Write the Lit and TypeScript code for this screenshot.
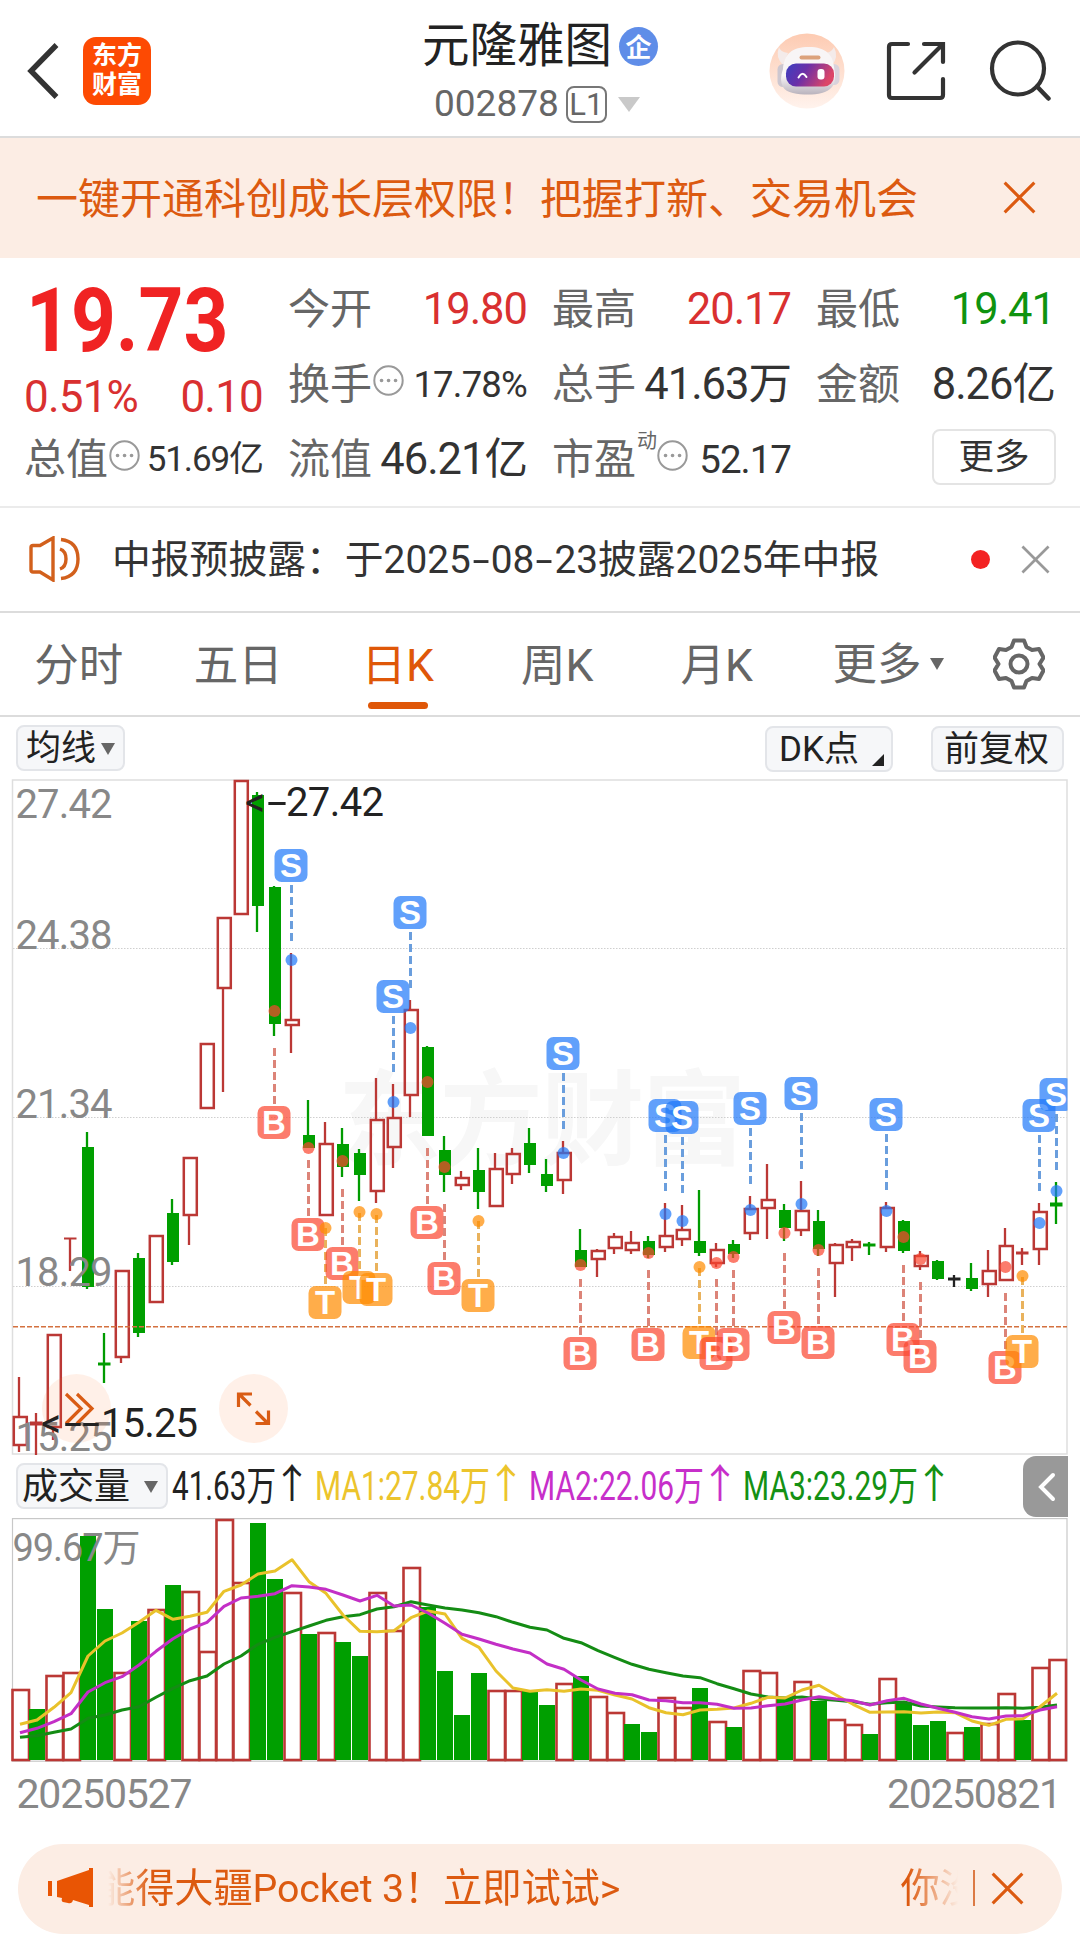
import {LitElement, css, html, svg} from 'lit';
import {customElement} from 'lit/decorators.js';

type Tone = 'up' | 'down' | 'flat';

// tone, high, body top, body bottom, low
type Candle = [Tone, number, number, number, number];

// badge letter, candle index, dot y
type Signal = ['S' | 'B' | 'T', number, number];

const STEP = 17;
const FIRST_X = 19;
const candleX = (i: number) => FIRST_X + i * STEP;

const CANDLES: Candle[] = [
  ['up', 1377, 1416, 1446, 1452],
  ['up', 1413, 1422, 1425, 1455],
  ['up', 1334, 1334, 1428, 1440],
  ['up', 1238, 1238, 1239, 1271],
  ['down', 1132, 1147, 1287, 1289],
  ['down', 1333, 1363, 1365, 1383],
  ['up', 1270, 1270, 1358, 1363],
  ['down', 1253, 1258, 1333, 1337],
  ['up', 1235, 1235, 1303, 1303],
  ['down', 1199, 1213, 1262, 1265],
  ['up', 1157, 1157, 1216, 1245],
  ['up', 1043, 1043, 1109, 1109],
  ['up', 917, 917, 989, 1092],
  ['up', 780, 780, 915, 915],
  ['down', 792, 795, 906, 932],
  ['down', 886, 887, 1024, 1036],
  ['up', 953, 1019, 1026, 1053],
  ['down', 1100, 1135, 1148, 1148],
  ['up', 1122, 1143, 1216, 1216],
  ['down', 1128, 1144, 1167, 1177],
  ['down', 1149, 1153, 1175, 1201],
  ['up', 1078, 1119, 1192, 1203],
  ['up', 1084, 1117, 1148, 1168],
  ['up', 1000, 1009, 1096, 1117],
  ['down', 1046, 1047, 1136, 1136],
  ['down', 1136, 1150, 1175, 1192],
  ['up', 1171, 1177, 1186, 1190],
  ['down', 1148, 1170, 1192, 1209],
  ['up', 1153, 1168, 1207, 1207],
  ['up', 1148, 1153, 1175, 1184],
  ['down', 1128, 1143, 1165, 1173],
  ['down', 1159, 1174, 1186, 1192],
  ['up', 1141, 1152, 1181, 1194],
  ['down', 1229, 1250, 1267, 1267],
  ['up', 1249, 1250, 1260, 1277],
  ['up', 1233, 1236, 1249, 1254],
  ['up', 1231, 1242, 1251, 1254],
  ['down', 1236, 1241, 1255, 1258],
  ['up', 1203, 1235, 1248, 1252],
  ['up', 1205, 1229, 1240, 1246],
  ['down', 1190, 1241, 1253, 1256],
  ['up', 1243, 1249, 1264, 1267],
  ['down', 1240, 1244, 1254, 1258],
  ['up', 1196, 1208, 1234, 1240],
  ['up', 1164, 1199, 1209, 1239],
  ['down', 1204, 1210, 1228, 1241],
  ['up', 1181, 1210, 1231, 1236],
  ['down', 1210, 1221, 1249, 1256],
  ['up', 1243, 1244, 1264, 1297],
  ['up', 1239, 1241, 1248, 1261],
  ['down', 1242, 1244, 1246, 1255],
  ['up', 1202, 1207, 1248, 1252],
  ['down', 1220, 1221, 1251, 1253],
  ['up', 1251, 1255, 1267, 1270],
  ['down', 1260, 1261, 1279, 1280],
  ['flat', 1275, 1278, 1280, 1287],
  ['down', 1263, 1278, 1289, 1291],
  ['up', 1250, 1270, 1285, 1297],
  ['up', 1228, 1245, 1281, 1281],
  ['up', 1248, 1252, 1254, 1265],
  ['up', 1203, 1211, 1250, 1265],
  ['down', 1182, 1203, 1206, 1224],
];

const SIGNALS: Signal[] = [
  ['B', 15, 1011], ['S', 16, 960], ['B', 17, 1148], ['T', 18, 1228], ['B', 19, 1161],
  ['T', 20, 1212], ['T', 21, 1214], ['S', 22, 1102], ['S', 23, 1028], ['B', 24, 1082],
  ['B', 25, 1167], ['T', 27, 1221], ['S', 32, 1153], ['B', 33, 1265], ['B', 37, 1253],
  ['S', 38, 1214], ['S', 39, 1221], ['T', 40, 1267], ['B', 41, 1263], ['B', 42, 1257],
  ['S', 43, 1210], ['B', 45, 1233], ['S', 46, 1204], ['B', 47, 1250], ['S', 51, 1211],
  ['B', 52, 1237], ['B', 53, 1259], ['B', 58, 1267], ['T', 59, 1276], ['S', 60, 1223],
  ['S', 61, 1191],
];

// bar tops, negative marks a falling (solid) bar
const VOLUMES = [
  1689, -1709, 1675, 1672, -1536, -1609, 1672, -1621, 1609, -1585, 1591, 1651, 1519, 1582, -1523, -1579,
  1592, -1634, 1632, -1642, -1656, 1592, 1630, 1567, -1607, -1671, -1715, -1673, 1690, 1690, -1691, -1705,
  1683, -1676, 1696, 1712, -1724, -1732, 1697, 1707, -1688, 1721, -1727, 1670, 1672, -1697, 1681, -1701,
  1719, 1724, -1734, 1678, -1702, -1725, -1721, 1732, -1727, 1723, 1693, -1720, 1667, 1659,
];

// moving averages, in thirds of a pixel below y = 1450
const MA1 = [
  823, 810, 772, 728, 618, 573, 549, 517, 481, 508, 499, 487, 424, 405, 372, 363, 329, 395, 430, 495, 544,
  545, 542, 503, 483, 492, 565, 592, 663, 714, 724, 719, 724, 717, 721, 735, 747, 773, 788, 794, 780, 778,
  774, 760, 742, 744, 720, 706, 735, 763, 787, 786, 785, 789, 786, 788, 813, 826, 808, 806, 770, 730,
];
const MA2 = [
  848, 835, 815, 791, 726, 698, 680, 645, 604, 566, 537, 517, 469, 444, 439, 431, 407, 411, 418, 435, 453,
  436, 468, 465, 489, 520, 553, 567, 583, 597, 609, 642, 658, 690, 717, 730, 734, 750, 752, 758, 758, 763,
  775, 774, 767, 762, 750, 740, 747, 752, 765, 752, 745, 762, 775, 787, 800, 807, 798, 797, 780, 770,
];
const MA3 = [
  862, 857, 847, 837, 805, 795, 780, 770, 742, 715, 692, 678, 642, 618, 583, 562, 545, 528, 511, 500, 494,
  477, 470, 455, 465, 474, 480, 488, 500, 517, 532, 540, 565, 578, 602, 623, 643, 658, 668, 678, 683, 701,
  716, 732, 741, 744, 741, 747, 751, 755, 763, 758, 756, 768, 771, 773, 774, 774, 773, 775, 772, 765,
];

const maPoints = (ma: number[]) =>
  ma.map((v, i) => `${candleX(i) + 1},${(1450 + v / 3).toFixed(1)}`).join(' ');

const cross = (size: number) => html`
  <svg class="cross" width=${size} height=${size} viewBox="0 0 30 30">
    <path d="M1.5 1.5 28.5 28.5M28.5 1.5 1.5 28.5" />
  </svg>
`;

const dots = html`
  <svg class="dots" width="31" height="31" viewBox="0 0 31 31">
    <circle cx="15.5" cy="15.5" r="14.2" />
    <path d="M8.5 15.5h.1M15.5 15.5h.1M22.5 15.5h.1" />
  </svg>
`;

@customElement('kline-chart')
export class KlineChart extends LitElement {
  static styles = css`
    :host {
      display: block;
      height: 684px;
      font-family: Roboto, 'Noto Sans CJK SC', sans-serif;
    }
    svg { display: block; }
    .frame { fill: none; stroke: #dedede; stroke-width: 1.5; }
    .grid { stroke: #cfcfcf; stroke-width: 1; stroke-dasharray: 1.5 1.5; }
    .last { stroke: #d4713f; stroke-width: 1.6; stroke-dasharray: 5 2; }
    .watermark { font: 700 103px 'Noto Sans CJK SC', sans-serif; fill: #f7f7f7; }
    .wick { stroke-width: 2.3; }
    .body { stroke-width: 2.5; }
    .up { stroke: #bb3835; fill: none; }
    .down { stroke: #009b00; fill: #009f00; }
    .flat { stroke: #222; fill: #222; }
    .down.body { stroke: none; }
    .axis { font-size: 40px; fill: #888; }
    .mark { font-size: 40px; fill: #222; }
    .round { fill: rgba(255, 120, 50, 0.11); }
    .icon { fill: none; stroke: #d95c14; stroke-width: 3.2; }
    .stem { stroke-width: 3; stroke-dasharray: 8 4; }
    .badge-text { font: 700 33px 'Liberation Sans', sans-serif; fill: #fff; text-anchor: middle; }
    .S .stem { stroke: #6a9edd; }
    .B .stem { stroke: #dc8478; }
    .T .stem { stroke: #e9b25c; }
    .S .shape { fill: rgba(32, 121, 250, 0.71); }
    .B .shape { fill: rgba(251, 71, 48, 0.71); }
    .T .shape { fill: rgba(255, 140, 0, 0.71); }
  `;

  private renderCandle([tone, high, top, bottom, low]: Candle, i: number) {
    const x = candleX(i);
    if (bottom - top < 5) {
      return svg`
        <path class="wick ${tone}" d="M${x} ${high}V${low}" />
        <path class="${tone}" stroke-width=${bottom - top + 1} d="M${x - 6} ${(top + bottom) / 2}H${x + 6.5}" />
      `;
    }
    return svg`
      <path class="wick ${tone}" d="M${x} ${high}V${top}M${x} ${bottom}V${low}" />
      ${tone === 'up'
        ? svg`<rect class="body up" x=${x - 5.2} y=${top + 1} width="13" height=${bottom - top - 2} />`
        : svg`<rect class="body ${tone}" x=${x - 5} y=${top} width="12" height=${bottom - top} />`}
    `;
  }

  private renderSignal([kind, i, dot]: Signal) {
    const x = candleX(i);
    const [, high, , , low] = CANDLES[i];
    const start = kind === 'S' ? high - 68 : low + 12;
    const center = kind === 'S' ? high - 87.5 : low + 86.5;
    return svg`
      <g class=${kind}>
        <path class="stem" d="M${x + 0.5} ${start}v56" />
        <circle class="shape" cx=${x + 0.5} cy=${dot} r="6" />
        <rect class="shape" x=${x - 16.5} y=${center - 16.5} width="33" height="33" rx="7" />
        <text class="badge-text" x=${x} y=${center + 11.5}>${kind}</text>
      </g>
    `;
  }

  render() {
    return html`
      <svg width="1080" height="684" viewBox="0 774 1080 684">
        <defs>
          <clipPath id="plot"><rect x="12" y="779" width="1055.5" height="678" /></clipPath>
        </defs>
        <text class="watermark" x="338" y="1157" textLength="408">东方财富</text>
        ${[948.5, 1117.5, 1286.5].map((y) => svg`<path class="grid" d="M13 ${y}H1067" />`)}
        <rect class="frame" x="12.5" y="780" width="1054.5" height="674" />
        <g clip-path="url(#plot)">
          ${CANDLES.map((c, i) => this.renderCandle(c, i))}
          <path class="last" d="M13 1326.7H1067" />
          ${SIGNALS.map((s) => this.renderSignal(s))}
        </g>
        <g class="axis">
          <text x="15.5" y="818" textLength="97">27.42</text>
          <text x="15.5" y="949" textLength="97">24.38</text>
          <text x="15.5" y="1118" textLength="97">21.34</text>
          <text x="15.5" y="1286" textLength="97">18.29</text>
          <text x="15.5" y="1451" textLength="97">15.25</text>
        </g>
        <circle class="round" cx="76.5" cy="1408.5" r="34.5" />
        <circle class="round" cx="253.5" cy="1408.5" r="34.5" />
        <path class="icon" d="M66 1394l15 14.5-15 15M77 1394l15 14.5-15 15" />
        <path class="icon" d="M252 1394h-13.5v13M239 1394l11.5 11.5M255.5 1423.5h13v-13M268 1423.5l-12-12" />
        <g class="mark">
          <text x="245" y="816">&lt;</text>
          <text x="267" y="816" textLength="20" lengthAdjust="spacingAndGlyphs">-</text>
          <text x="286" y="816" textLength="98">27.42</text>
          <text x="41" y="1437">&lt;</text>
          <text x="64" y="1437" textLength="36" lengthAdjust="spacingAndGlyphs">--</text>
          <text x="101" y="1437" textLength="97">15.25</text>
        </g>
      </svg>
    `;
  }
}

@customElement('volume-chart')
export class VolumeChart extends LitElement {
  static styles = css`
    :host {
      display: block;
      height: 302px;
      font-family: Roboto, 'Noto Sans CJK SC', sans-serif;
    }
    svg { display: block; }
    .frame { fill: none; stroke: #c8c8c8; stroke-width: 1.2; }
    .up { fill: #fff; stroke: #bb3835; stroke-width: 2.6; }
    .down { fill: #009f00; }
    .line { fill: none; stroke-width: 3; stroke-linejoin: round; }
    .ma1 { stroke: #e9c22b; }
    .ma2 { stroke: #c32fc6; }
    .ma3 { stroke: #148c14; }
    .label { font-size: 38px; fill: #888; }
    .date { font-size: 41px; fill: #888; }
  `;

  render() {
    return html`
      <svg width="1080" height="302" viewBox="0 1518 1080 302">
        <rect class="frame" x="12.5" y="1518.6" width="1054.5" height="242.6" />
        ${VOLUMES.map((v, i) => {
          const x = candleX(i);
          const top = Math.abs(v);
          return v > 0
            ? svg`<rect class="up" x=${x - 6.5} y=${top + 1} width="16.5" height=${1759 - top} />`
            : svg`<rect class="down" x=${x - 7} y=${top} width="16" height=${1760 - top} />`;
        })}
        <polyline class="line ma3" points=${maPoints(MA3)} />
        <polyline class="line ma1" points=${maPoints(MA1)} />
        <polyline class="line ma2" points=${maPoints(MA2)} />
        <text class="label" x="12.5" y="1561" textLength="128">99.67万</text>
        <text class="date" x="16.5" y="1808" textLength="176">20250527</text>
        <text class="date" x="887" y="1808" textLength="175">20250821</text>
      </svg>
    `;
  }
}

@customElement('app-root')
export class AppRoot extends LitElement {
  static styles = css`
    :host {
      display: block;
      width: 1080px;
      height: 1941px;
      overflow: hidden;
      background: #fff;
      color: #333;
      font-family: Roboto, 'Noto Sans CJK SC', sans-serif;
      line-height: 1.2;
    }

    * { box-sizing: border-box; }
    svg { display: block; flex: none; }
    .cross { fill: none; stroke: currentColor; stroke-width: 2.8; }

    header {
      display: grid;
      grid-template-columns: 1fr auto 1fr;
      height: 138px;
      padding: 0 29px 0 27px;
      border-bottom: 2px solid #dcdcdc;
    }
    .left, .right {
      display: flex;
      align-items: center;
      height: 141px;
    }
    .left { gap: 23px; }
    .logo {
      width: 68px;
      height: 68px;
      padding-top: 2px;
      border-radius: 13px;
      background: #fd4a03;
      color: #fff;
      font: 700 25px/29.5px 'Noto Sans CJK SC', sans-serif;
      text-align: center;
    }
    .right { justify-content: flex-end; }
    .share { margin: 0 43px 0 41px; }

    .title { padding: 19px 0 0 2px; }
    .name {
      display: flex;
      align-items: center;
      gap: 7px;
      height: 54px;
      color: #222;
      font-size: 47.5px;
      line-height: 56px;
    }
    .corp {
      width: 39px;
      height: 39px;
      border-radius: 50%;
      background: #5f8de8;
      color: #fff;
      font: 700 26px/37px 'Noto Sans CJK SC', sans-serif;
      text-align: center;
    }
    .code {
      display: flex;
      align-items: center;
      gap: 7px;
      margin-left: 12px;
      height: 63px;
      color: #666;
      font-size: 37px;
    }
    .level {
      width: 41px;
      height: 37px;
      border: 2px solid #777;
      border-radius: 8px;
      font-size: 31px;
      line-height: 34px;
      text-align: center;
    }
    .caret {
      width: 0;
      height: 0;
      border: solid transparent;
      border-width: 12px 7.5px 0;
      border-top-color: #666;
    }
    .code .caret {
      margin-left: 4px;
      border-width: 15px 11px 0;
      border-top-color: #c9c9c9;
    }

    .promo {
      display: flex;
      align-items: center;
      justify-content: space-between;
      height: 120px;
      padding: 2px 44px 4px 36px;
      background: #fcede4;
      color: #dc5a10;
      font-size: 42px;
    }
    .promo span { padding-top: 6px; }

    .quote {
      display: grid;
      grid-template-columns: repeat(4, 239px);
      grid-template-rows: 75px 75px 75px;
      column-gap: 25px;
      height: 250px;
      padding: 13px 25px 0 24px;
      border-bottom: 2px solid #ebebeb;
    }
    .price {
      grid-row: span 2;
      color: #f02323;
    }
    .last {
      height: 105px;
      margin-left: 2px;
      font-size: 89px;
      font-weight: 700;
      line-height: 100px;
      transform: scaleX(0.88);
      transform-origin: left;
    }
    .change {
      display: flex;
      justify-content: space-between;
      color: #d93030;
      font-size: 44px;
      line-height: 42px;
      letter-spacing: -0.8px;
    }
    .cell {
      display: flex;
      align-items: center;
      height: 75px;
      font-size: 42px;
      white-space: nowrap;
    }
    .cell > span:first-child {
      padding-top: 3px;
      color: #666;
    }
    .cell b {
      margin-left: auto;
      padding-top: 3px;
      font-size: 43.5px;
      font-weight: 400;
      letter-spacing: -1px;
    }
    .cell b.mid { font-size: 38.5px; }
    .cell b.small {
      font-size: 35px;
      letter-spacing: -1.1px;
    }
    .cell b.rate {
      font-size: 36.5px;
      letter-spacing: -0.8px;
    }
    .cell .red { color: #d93030; }
    .cell .green { color: #0f930f; }
    .dots {
      margin: -6px 0 0 1px;
      fill: none;
      stroke: #999;
      stroke-width: 2;
    }
    .dots path {
      stroke-width: 3.6;
      stroke-linecap: round;
    }
    .cell sup {
      align-self: flex-start;
      margin: 8px -18px 0 1px;
      color: #666;
      font-size: 20px;
      line-height: 24px;
    }
    .cell sup + .dots { margin-left: 18px; }
    .more {
      width: 124px;
      height: 56px;
      margin: 8px 0 0 116px;
      border: 2px solid #e4e4e4;
      border-radius: 8px;
      font-size: 35.5px;
      line-height: 52px;
      text-align: center;
    }

    .news {
      display: flex;
      align-items: center;
      height: 105px;
      padding: 0 30px 1px 29px;
      border-bottom: 2px solid #dcdcdc;
      font-size: 38.8px;
    }
    .news p {
      margin: 3px auto 0 31px;
      white-space: nowrap;
    }
    .hyphen {
      display: inline-block;
      width: 20px;
      text-align: center;
      transform: scaleX(1.6);
    }
    .dot {
      width: 19px;
      height: 19px;
      margin-right: 31px;
      border-radius: 50%;
      background: #f32222;
    }
    .news .cross { color: #999; }

    nav {
      display: flex;
      align-items: center;
      height: 104px;
      border-bottom: 2px solid #dcdcdc;
      color: #666;
      font-size: 44.5px;
    }
    .tab {
      position: relative;
      width: 159.5px;
      height: 102px;
      line-height: 106px;
      text-align: center;
    }
    .tab:first-child { margin-left: -1px; }
    .tab.active { color: #df5708; }
    .tab.active::after {
      content: '';
      position: absolute;
      bottom: 6px;
      left: 50%;
      width: 60px;
      height: 7px;
      margin-left: -30px;
      border-radius: 4px;
      background: #df5708;
    }
    .menu {
      display: flex;
      align-items: center;
      gap: 8px;
      margin: 0 49px 0 36px;
    }
    .menu span { padding-top: 4px; }

    .tools {
      display: flex;
      height: 57px;
      padding: 8px 16px 0;
    }
    .chip {
      display: flex;
      align-items: center;
      height: 46px;
      padding: 1px 8px 0;
      border: 2px solid #e3e5e9;
      border-radius: 8px;
      background: #f6f7f9;
      color: #222;
      font-size: 35px;
      line-height: 40px;
      white-space: nowrap;
    }
    .chip .caret { margin: 0 0 0 5px; }
    .dk {
      width: 128px;
      margin: 1px 38px 0 auto;
      padding-left: 12px;
    }
    .corner {
      align-self: flex-end;
      width: 0;
      height: 0;
      margin: 0 0 4px 13px;
      border: solid transparent;
      border-width: 12px 0 0 12px;
      border-bottom: 12px solid #222;
      border-top: 0;
    }
    .adjust { width: 133px; margin-top: 1px; padding-left: 11px; }

    .volume-head {
      display: flex;
      height: 60px;
      padding-left: 16px;
    }
    .volume-head .chip {
      width: 152px;
      margin-top: 5px;
      padding-left: 4px;
      font-size: 36px;
    }
    .volume-head .chip .caret { margin-left: 14px; }
    .figures { overflow: visible; }
    .figures text { font-size: 40px; }
    .figures .arrow { text-anchor: middle; }
    .fold {
      width: 45px;
      height: 61px;
      margin: -2px 12px 0 auto;
      padding: 16px 0 0 14px;
      border-radius: 13px 0 0 13px;
      background: #999;
    }

    .bar {
      display: flex;
      align-items: center;
      height: 90px;
      margin: 24px 18px 0;
      padding: 0 38px 2px 30px;
      border-radius: 45px;
      background: #fcede4;
      color: #dc5a10;
      font-size: 39.3px;
    }
    .marquee {
      display: flex;
      justify-content: space-between;
      width: 851px;
      margin-left: 14px;
      padding-top: 4px;
      overflow: hidden;
      white-space: nowrap;
      -webkit-mask-image: linear-gradient(90deg, transparent 0, #000 42px, #000 800px, transparent 850px);
    }
    .marquee span:first-child { margin-left: -12px; letter-spacing: -0.15px; }
    .marquee span:last-child { margin-right: -21px; }
    .rule {
      width: 2px;
      height: 36px;
      margin: 0 16px 0 15px;
      background: #dc7a45;
    }
  `;

  private renderFigure(x: number, width: number, color: string, text: string) {
    return svg`
      <text x=${x} y="42" fill=${color} textLength=${width} lengthAdjust="spacingAndGlyphs">${text}</text>
      <text class="arrow" x=${x + width + 16} y="40" fill=${color}>↑</text>
    `;
  }

  render() {
    return html`
      <header>
        <div class="left">
          <svg width="33" height="56" viewBox="0 0 33 56">
            <path d="M29.5 2 4 28l25.5 26" fill="none" stroke="#333" stroke-width="5.4" />
          </svg>
          <div class="logo">东方<br />财富</div>
        </div>
        <div class="title">
          <div class="name">元隆雅图<span class="corp">企</span></div>
          <div class="code">002878<span class="level">L1</span><i class="caret"></i></div>
        </div>
        <div class="right">
          <svg width="76" height="76" viewBox="770 32 76 76">
            <defs>
              <linearGradient id="halo" x2="0" y2="1">
                <stop offset="0" stop-color="#fdcbb2" />
                <stop offset="1" stop-color="#fff3ed" />
              </linearGradient>
              <linearGradient id="shell" x2="0" y2="1">
                <stop offset="0.6" stop-color="#f8f5f6" />
                <stop offset="1" stop-color="#b9b3bd" />
              </linearGradient>
              <linearGradient id="visor" y2="0.3">
                <stop offset="0" stop-color="#3b3fc0" />
                <stop offset="0.45" stop-color="#6a2fa8" />
                <stop offset="1" stop-color="#dc4668" />
              </linearGradient>
            </defs>
            <circle cx="808" cy="70" r="37.5" fill="url(#halo)" />
            <path d="M784 64q-8-8-4-18 1 5 9 6zM833 64q7-8 2-18-2 5-8 6z" fill="#f4ebea" />
            <rect x="778.5" y="63" width="12" height="23" rx="5.5" fill="#cdc7d0" />
            <rect x="829" y="63" width="11.5" height="21" rx="5.5" fill="#d9d3dc" />
            <path
              d="M784 68c1-15 9-22 26-22s24 8 25 20q3 14-2 20c-5 6-14 7.5-24 7.5S787 92 784 86q-4-7 0-18z"
              fill="url(#shell)" />
            <rect x="787" y="62.5" width="48" height="23" rx="10" fill="url(#visor)" />
            <rect x="800.5" y="54.5" width="21" height="4" rx="2" fill="#dca27c" />
            <path d="M799.5 76.5q4-7 8-.5" fill="none" stroke="#fff" stroke-width="2" stroke-linecap="round" />
            <rect x="818.5" y="68" width="7" height="10.5" rx="3" fill="#fff" />
          </svg>
          <svg class="share" width="60" height="60" viewBox="0 0 60 60">
            <path
              d="M22 3H6Q3 3 3 6v48q0 3 3 3h48q3 0 3-3V38M38 3h19v18M56.5 3.5 28.5 31.5"
              fill="none" stroke="#333" stroke-width="4.2" stroke-linecap="round" />
          </svg>
          <svg width="62" height="62" viewBox="0 0 62 62">
            <circle cx="29" cy="28.5" r="26" fill="none" stroke="#333" stroke-width="4.2" />
            <path d="M48 46.5 59.5 58.5" stroke="#333" stroke-width="4.5" stroke-linecap="round" />
          </svg>
        </div>
      </header>

      <section class="promo">
        <span>一键开通科创成长层权限！把握打新、交易机会</span>
        ${cross(33)}
      </section>

      <section class="quote">
        <div class="price">
          <div class="last">19.73</div>
          <div class="change"><span>0.51%</span><span>0.10</span></div>
        </div>
        <div class="cell"><span>今开</span><b class="red">19.80</b></div>
        <div class="cell"><span>最高</span><b class="red">20.17</b></div>
        <div class="cell"><span>最低</span><b class="green">19.41</b></div>
        <div class="cell"><span>换手</span>${dots}<b class="rate">17.78%</b></div>
        <div class="cell"><span>总手</span><b>41.63万</b></div>
        <div class="cell"><span>金额</span><b>8.26亿</b></div>
        <div class="cell"><span>总值</span>${dots}<b class="small">51.69亿</b></div>
        <div class="cell"><span>流值</span><b>46.21亿</b></div>
        <div class="cell"><span>市盈</span><sup>动</sup>${dots}<b class="mid">52.17</b></div>
        <div class="more">更多</div>
      </section>

      <section class="news">
        <svg width="52" height="46" viewBox="0 0 52 46" fill="none" stroke="#d2601c" stroke-width="3.4">
          <path d="M2 11.5q0-2 2-2h7L24 2v42l-13-8H4q-2 0-2-2z" />
          <path d="M31 13q6 2 6 10t-6 10M32 3.5q17 2 17 19.5T32 42.5" />
        </svg>
        <p>中报预披露：于2025<span class="hyphen">-</span>08<span class="hyphen">-</span>23披露2025年中报</p>
        <i class="dot"></i>
        ${cross(29)}
      </section>

      <nav>
        <div class="tab">分时</div>
        <div class="tab">五日</div>
        <div class="tab active">日K</div>
        <div class="tab">周K</div>
        <div class="tab">月K</div>
        <div class="menu"><span>更多</span><i class="caret"></i></div>
        <svg width="52" height="52" viewBox="-26 -26 52 52" fill="none" stroke="#666" stroke-width="4">
          <path
            stroke-linejoin="round"
            d="M-5-23.5H5L7.5-17 13-14l7-1 4.5 8.5L20.5 0l4 6.5L20 15l-7-1-5.5 3L5 23.5H-5L-7.5 17-13 14l-7 1-4.5-8.5 4-6.5-4-6.5L-20-15l7 1 5.5-3z" />
          <circle r="8.5" />
        </svg>
      </nav>

      <div class="tools">
        <div class="chip">均线<i class="caret"></i></div>
        <div class="chip dk">DK点<i class="corner"></i></div>
        <div class="chip adjust">前复权</div>
      </div>

      <kline-chart></kline-chart>

      <div class="volume-head">
        <div class="chip">成交量<i class="caret"></i></div>
        <svg class="figures" width="790" height="60" viewBox="168 0 790 60">
          ${this.renderFigure(172, 104, '#222', '41.63万')}
          ${this.renderFigure(315, 175, '#ecc42c', 'MA1:27.84万')}
          ${this.renderFigure(529, 175, '#c72fca', 'MA2:22.06万')}
          ${this.renderFigure(743, 175, '#149114', 'MA3:23.29万')}
        </svg>
        <div class="fold">
          <svg width="20" height="30" viewBox="0 0 20 30">
            <path d="M16 3 4 15l12 12" fill="none" stroke="#fff" stroke-width="4" stroke-linecap="round" />
          </svg>
        </div>
      </div>

      <volume-chart></volume-chart>

      <section class="bar">
        <svg width="46" height="40" viewBox="0 0 46 40" fill="#e95504">
          <path d="M0 13h4v15H0zM9 13 41 2V0h4v39h-4v-2l-16-5q-1 4-5 3l-5-1q-2-1-1-4l-5-1z" />
        </svg>
        <div class="marquee"><span>能得大疆Pocket 3！立即试试></span><span>你没</span></div>
        <i class="rule"></i>
        ${cross(33)}
      </section>
    `;
  }
}
